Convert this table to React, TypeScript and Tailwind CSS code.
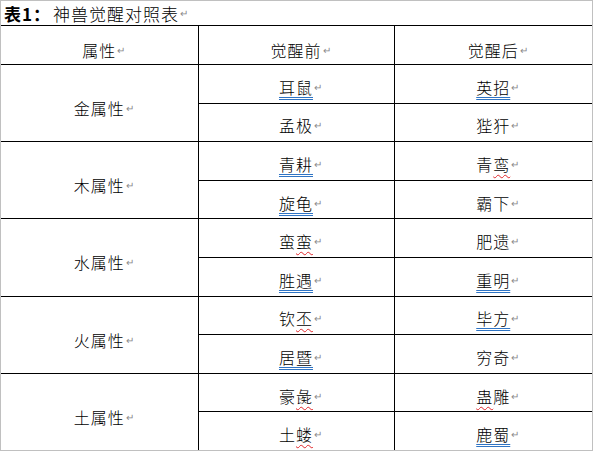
type Deco = "blue" | "red" | undefined;
type Seg = [string, Deco?];

interface Group {
  name: string;
  rows: [Seg[], Seg[]][];
}

const groups: Group[] = [
  {
    name: "金属性",
    rows: [
      [[["耳鼠", "blue"]], [["英招", "blue"]]],
      [[["孟极"]], [["狴犴"]]],
    ],
  },
  {
    name: "木属性",
    rows: [
      [[["青耕", "blue"]], [["青"], ["鸾", "red"]]],
      [[["旋龟", "blue"]], [["霸下"]]],
    ],
  },
  {
    name: "水属性",
    rows: [
      [[["蛮"], ["蛮", "red"]], [["肥遗"]]],
      [[["胜遇", "blue"]], [["重明", "blue"]]],
    ],
  },
  {
    name: "火属性",
    rows: [
      [[["钦"], ["丕", "red"]], [["毕方", "blue"]]],
      [[["居暨", "blue"]], [["穷奇"]]],
    ],
  },
  {
    name: "土属性",
    rows: [
      [[["豪"], ["彘", "red"]], [["蛊", "red"], ["雕"]]],
      [[["土"], ["蝼", "red"]], [["鹿蜀", "blue"]]],
    ],
  },
];

// Word paragraph mark, kept outside the centering like in the document
const Mark = () => (
  <span className="absolute left-full top-[4px] ml-[1px] text-[10px] leading-none tracking-normal text-[#8a8a8a] font-['DejaVu_Sans',sans-serif]">
    ↵
  </span>
);

const CellText = ({ segs }: { segs: Seg[] }) => (
  <span className="relative inline-block">
    {segs.map(([t, d], i) => (
      <span
        key={i}
        className={
          d === "blue"
            ? "underline decoration-double decoration-[#2f74c4] decoration-1 underline-offset-[3px]"
            : d === "red"
            ? "underline decoration-wavy decoration-[#e0282c] decoration-1 underline-offset-[3px]"
            : ""
        }
      >
        {t}
      </span>
    ))}
    <Mark />
  </span>
);

const App = () => {
  return (
    <div className="w-[593px] h-[451px] border border-[#c0c0c0] bg-white overflow-hidden text-black font-light font-['Noto_Sans_CJK_SC',sans-serif]">
      <div className="h-[24px] pl-[3px] flex items-center text-[17px] leading-none">
        <span className="relative inline-block tracking-[1px]">
          <span className="font-bold">表1：</span>
          <span className="ml-[2px]">神兽觉醒对照表</span>
          <Mark />
        </span>
      </div>
      <table className="w-full table-fixed border-collapse text-[16px] leading-none tracking-[1px]">
        <colgroup>
          <col className="w-[197px]" />
          <col className="w-[196px]" />
          <col />
        </colgroup>
        <thead>
          <tr className="h-[39px]">
            {["属性", "觉醒前", "觉醒后"].map((h, i) => (
              <th
                key={h}
                className={`border-t border-black font-light text-center align-middle pt-[10px] ${i > 0 ? "border-l" : ""}`}
              >
                <CellText segs={[[h]]} />
              </th>
            ))}
          </tr>
        </thead>
        <tbody>
          {groups.map((g) =>
            g.rows.map((r, ri) => (
              <tr key={g.name + ri} className="h-[38.6px]">
                {ri === 0 && (
                  <td rowSpan={2} className="border-t border-black text-center align-middle pt-[10px]">
                    <CellText segs={[[g.name]]} />
                  </td>
                )}
                <td className="border-t border-l border-black text-center align-middle pt-[6px]">
                  <CellText segs={r[0]} />
                </td>
                <td className="border-t border-l border-black text-center align-middle pt-[6px]">
                  <CellText segs={r[1]} />
                </td>
              </tr>
            ))
          )}
        </tbody>
      </table>
    </div>
  );
};

export default App;
